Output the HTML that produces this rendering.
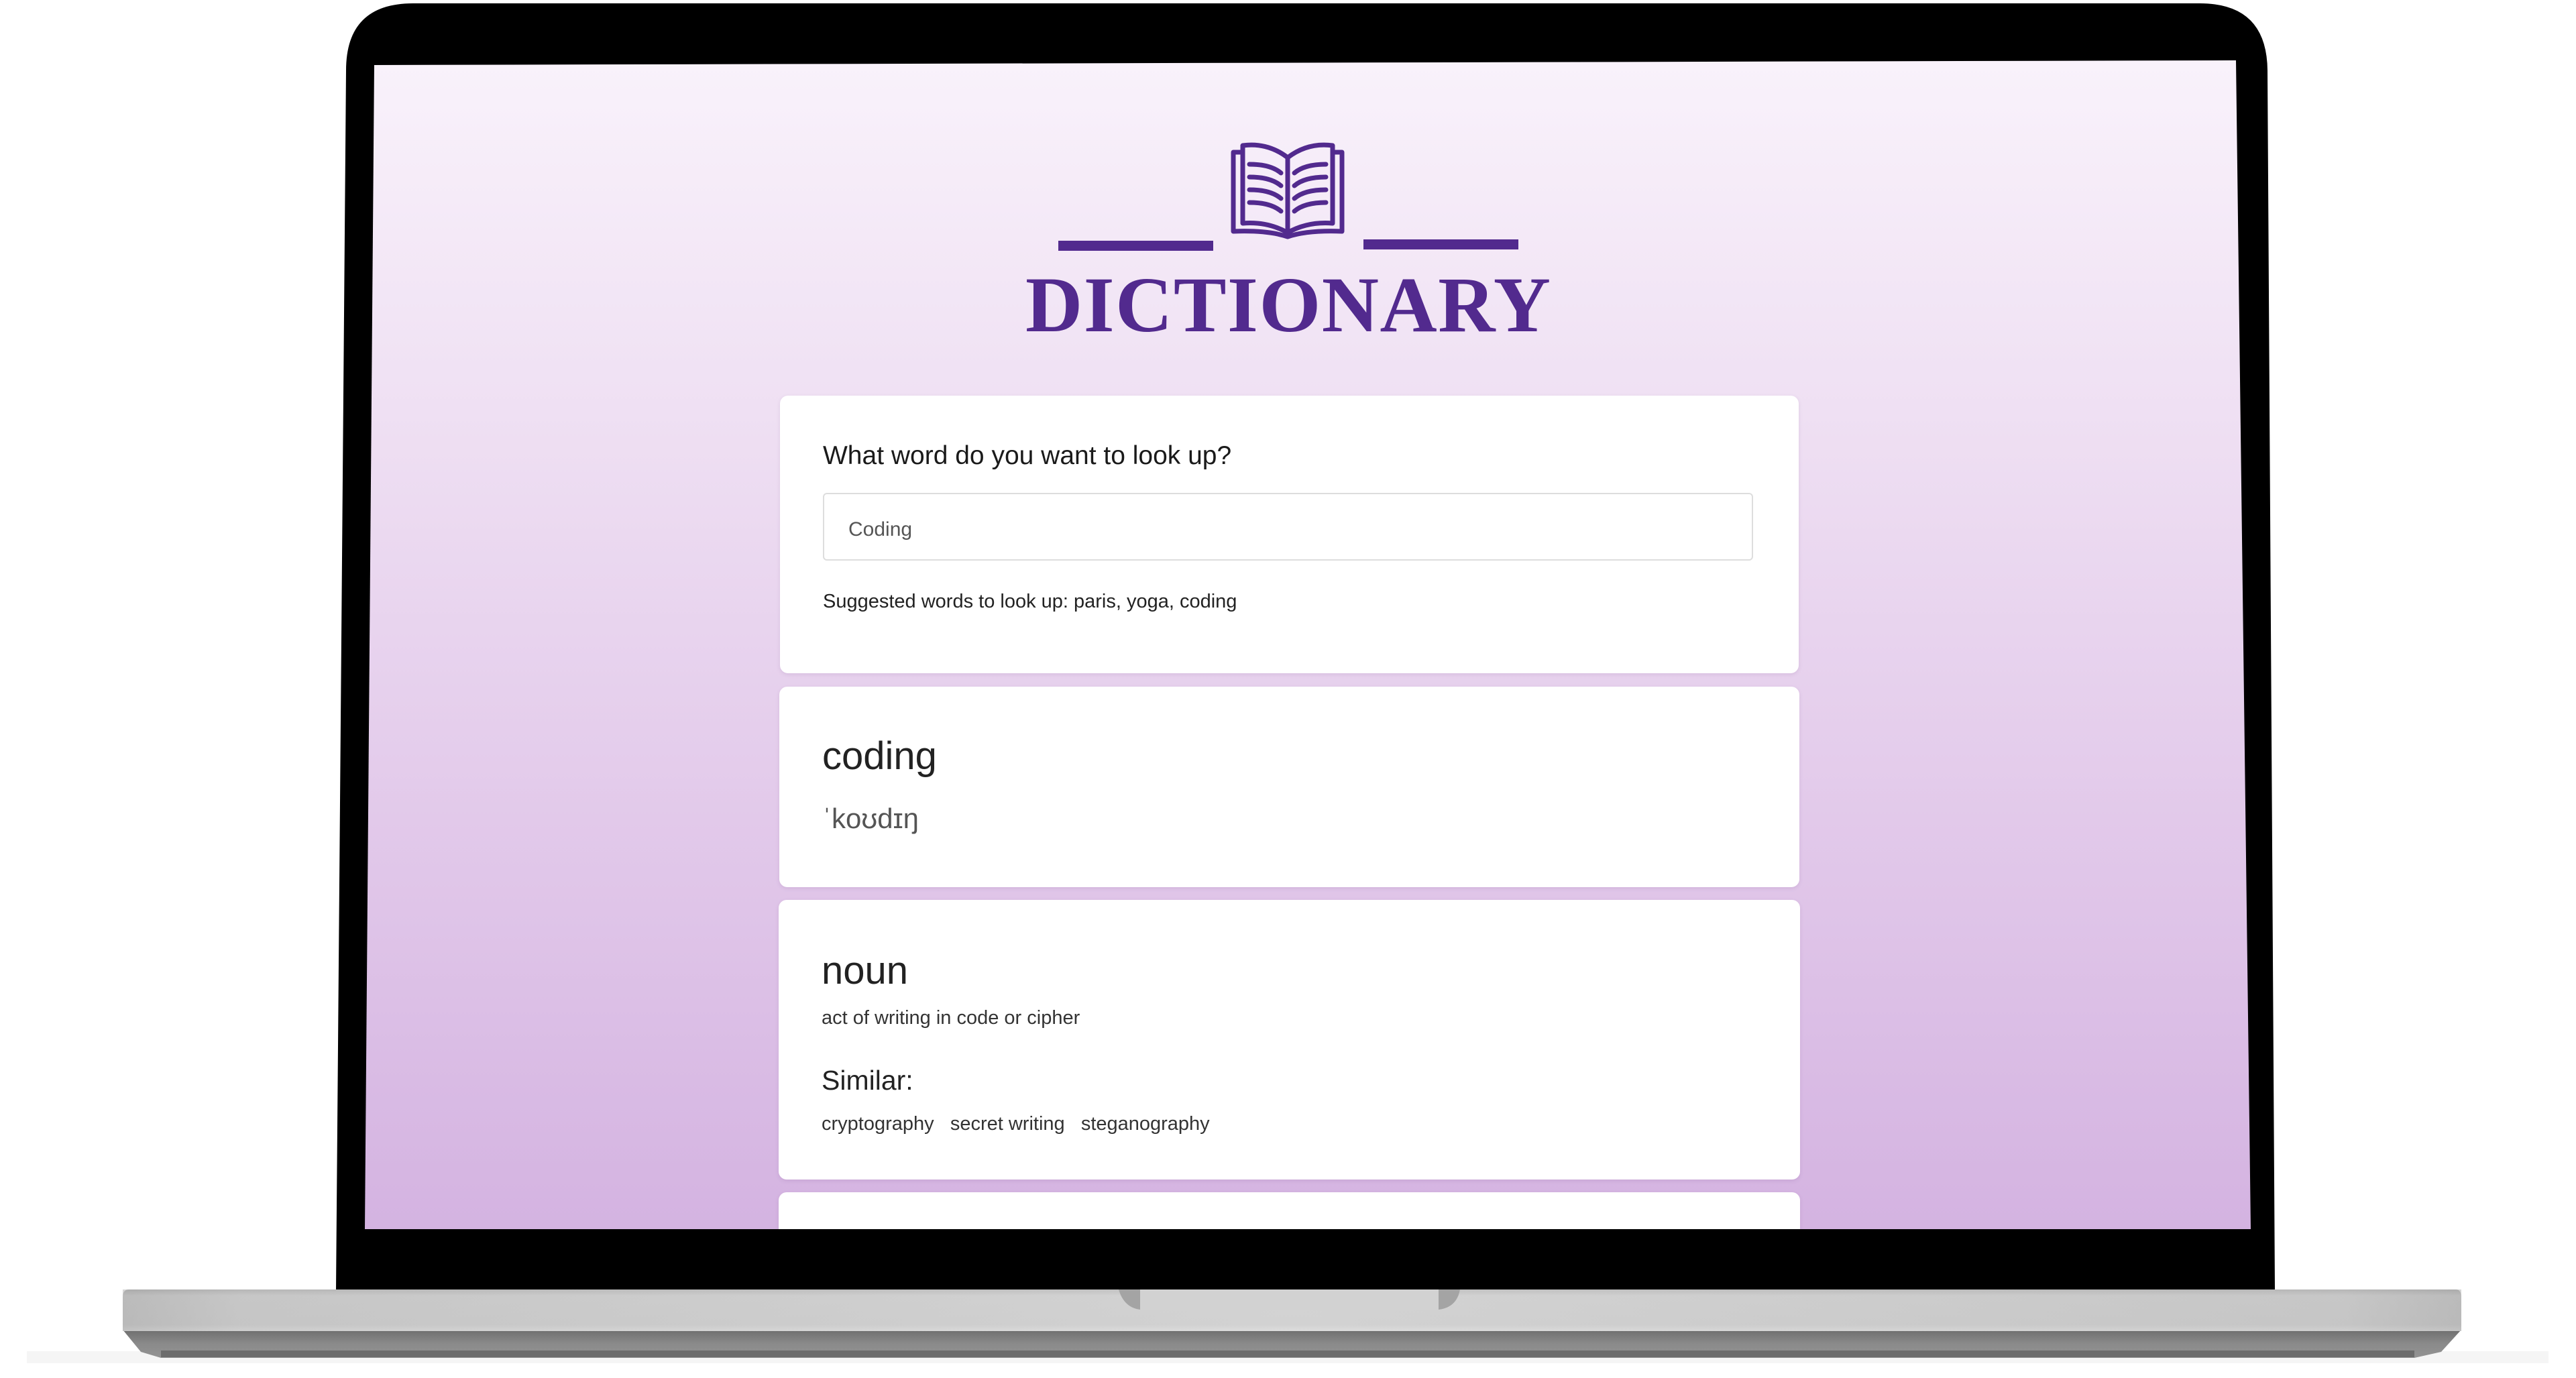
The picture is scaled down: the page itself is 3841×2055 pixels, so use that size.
<!DOCTYPE html>
<html><head><meta charset="utf-8">
<style>
html,body{margin:0;padding:0;width:3841px;height:2055px;background:#fff;overflow:hidden;font-family:"Liberation Sans",sans-serif;}
.abs{position:absolute;}
#screen{position:absolute;left:544px;top:90px;width:2812px;height:1743px;
 clip-path:polygon(14px 7px,2790px 0px,2812px 1743px,0px 1743px);
 background:linear-gradient(180deg,#f9f2fb 0%,#efe0f3 30%,#e2c9ea 65%,#d4b3e1 100%);overflow:hidden;}
.card{position:absolute;background:#fff;border-radius:12px;box-shadow:0 2px 6px rgba(120,80,140,.15);}
.t{position:absolute;white-space:nowrap;color:#222;}
</style></head><body>
<svg class="abs" style="left:0;top:0" width="3841" height="2055">
 <path d="M616 5 L3280 5 Q3380 5 3381 105 L3392 1924 L501 1924 L516 105 Q516 5 616 5 Z" fill="#000"/>
 <defs>
  <linearGradient id="g1" x1="0" y1="0" x2="0" y2="1">
   <stop offset="0" stop-color="#bdbdbd"/><stop offset="0.15" stop-color="#d6d6d6"/><stop offset="0.85" stop-color="#d4d4d4"/><stop offset="1" stop-color="#e4e4e4"/>
  </linearGradient>
  <linearGradient id="g2" x1="0" y1="0" x2="0" y2="1">
   <stop offset="0" stop-color="#6e6e6e"/><stop offset="0.5" stop-color="#8a8a8a"/><stop offset="1" stop-color="#939393"/>
  </linearGradient>
  <linearGradient id="gh" x1="0" y1="0" x2="1" y2="0">
   <stop offset="0" stop-color="#888"/><stop offset="0.05" stop-color="#aaa"/><stop offset="0.5" stop-color="#cfcfcf"/><stop offset="0.95" stop-color="#aaa"/><stop offset="1" stop-color="#888"/>
  </linearGradient>
 </defs>
 <rect x="40" y="2015" width="3760" height="18" fill="#eee" opacity=".6"/>
 <path d="M183 1983 L3670 1983 L3640 2016 L3600 2025 L240 2025 L210 2016 Z" fill="url(#g2)"/>
 <rect x="240" y="2014" width="3360" height="10" fill="#6c6c6c"/>
 <path d="M192 1923 L3662 1923 Q3670 1923 3670 1935 L3670 1985 L183 1985 L183 1935 Q183 1923 192 1923 Z" fill="url(#g1)"/>
 <rect x="183" y="1923" width="3487" height="62" fill="url(#gh)" opacity=".35"/>
 <path d="M1668 1923 L2177 1923 Q2172 1950 2150 1953 L1700 1953 Q1676 1950 1668 1923 Z" fill="#d2d2d2"/>
 <path d="M1668 1923 L1700 1923 L1700 1953 Q1676 1950 1668 1923 Z" fill="#999" opacity=".8"/>
 <path d="M2177 1923 L2145 1923 L2145 1953 Q2172 1950 2177 1923 Z" fill="#999" opacity=".8"/>
</svg>
<div id="screen">
 <svg class="abs" style="left:0;top:0" width="2812" height="600">
  <g transform="translate(-544,-90)">
   <rect x="1578" y="359" width="231" height="15" fill="#522a8e"/>
   <rect x="2033" y="357" width="231" height="15" fill="#522a8e"/>
   <g transform="translate(1820,200)" fill="none" stroke="#522a8e" stroke-width="7" stroke-linecap="round" stroke-linejoin="round">
    <path d="M33 17 Q70 12 100 35 Q130 12 167 17 L167 133 Q130 130 100 147 Q70 130 33 133 Z"/>
    <path d="M100 35 L100 147"/>
    <path d="M33 27 L19 27 L19 145 Q70 143 100 153 Q130 143 181 145 L181 27 L167 27"/>
    <path d="M43 45 Q75 45 90 58"/><path d="M43 64 Q75 64 90 77"/><path d="M43 83 Q75 83 90 96"/><path d="M43 102 Q75 102 90 115"/>
    <path d="M157 45 Q125 45 110 58"/><path d="M157 64 Q125 64 110 77"/><path d="M157 83 Q125 83 110 96"/><path d="M157 102 Q125 102 110 115"/>
   </g>
  </g>
 </svg>
 <div class="t" style="left:985px;top:300px;width:780px;text-align:center;font-family:'Liberation Serif',serif;font-weight:bold;font-size:118px;color:#522a8e;letter-spacing:1.5px;line-height:130px;">DICTIONARY</div>

 <div class="card" style="left:619px;top:500px;width:1519px;height:414px;">
  <div class="t" style="left:64px;top:68px;font-size:39px;color:#1a1a1a;">What word do you want to look up?</div>
  <div class="abs" style="left:64px;top:145px;width:1387px;height:101px;border:2px solid #ddd;border-radius:6px;box-sizing:border-box;">
   <div class="t" style="left:36px;top:36px;font-size:30px;color:#555;">Coding</div>
  </div>
  <div class="t" style="left:64px;top:291px;font-size:29px;">Suggested words to look up: paris, yoga, coding</div>
 </div>

 <div class="card" style="left:618px;top:934px;width:1521px;height:299px;">
  <div class="t" style="left:64px;top:70px;font-size:58px;color:#222;">coding</div>
  <div class="t" style="left:64px;top:173px;font-size:42px;color:#555;">ˈkoʊdɪŋ</div>
 </div>

 <div class="card" style="left:617px;top:1252px;width:1523px;height:417px;">
  <div class="t" style="left:64px;top:72px;font-size:58px;color:#222;">noun</div>
  <div class="t" style="left:64px;top:160px;font-size:29px;color:#333;">act of writing in code or cipher</div>
  <div class="t" style="left:64px;top:246px;font-size:41px;color:#222;">Similar:</div>
  <div class="t" style="left:64px;top:318px;font-size:29px;color:#333;">cryptography&nbsp;&nbsp;&nbsp;secret writing&nbsp;&nbsp;&nbsp;steganography</div>
 </div>

 <div class="card" style="left:617px;top:1688px;width:1523px;height:200px;"></div>
</div>
</body></html>
